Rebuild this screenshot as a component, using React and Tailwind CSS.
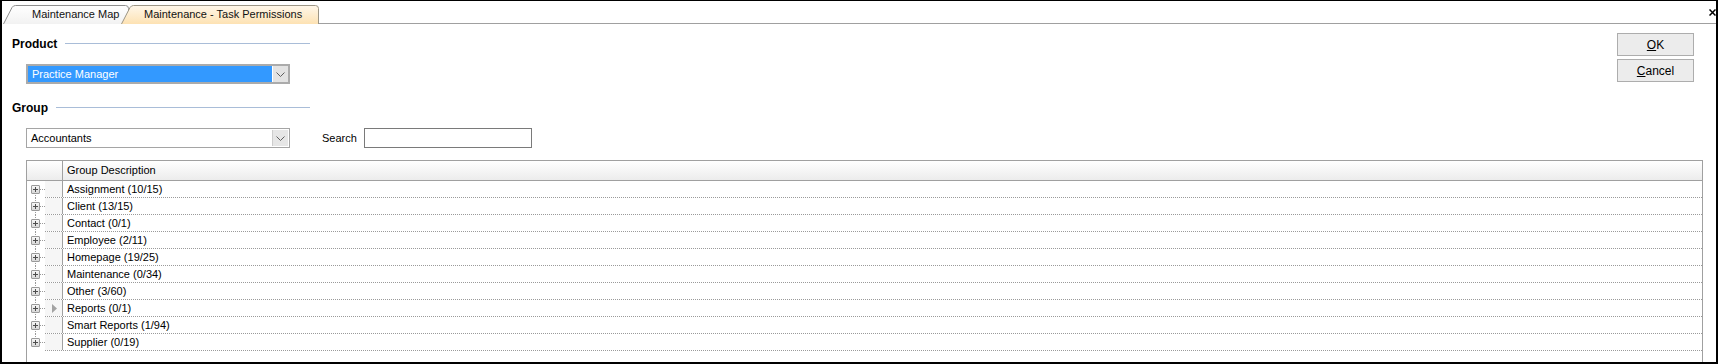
import React from "react";

// rows shown in the permissions grid
const groups = [
  "Assignment (10/15)",
  "Client (13/15)",
  "Contact (0/1)",
  "Employee (2/11)",
  "Homepage (19/25)",
  "Maintenance (0/34)",
  "Other (3/60)",
  "Reports (0/1)",
  "Smart Reports (1/94)",
  "Supplier (0/19)",
];

const Chevron = () => (
  <svg width="9" height="5" viewBox="0 0 9 5">
    <path d="M0.5 0.5 L4.5 4.5 L8.5 0.5" fill="none" stroke="#5f5f5f" strokeWidth="1" />
  </svg>
);

function Tab({ width, active, textLeft, children }) {
  const id = active ? "tabActive" : "tabIdle";
  return (
    <div className={`relative h-[19px] flex items-center ${active ? "-ml-[8px]" : "ml-[1px]"}`} style={{ width }}>
      <svg className="absolute inset-0" width={width} height="19">
        <defs>
          <linearGradient id={id} x1="0" y1="0" x2="0" y2="1">
            <stop offset="0" stopColor={active ? "#fff7ea" : "#ffffff"} />
            <stop offset="1" stopColor={active ? "#fde2b3" : "#f2f2f2"} />
          </linearGradient>
        </defs>
        <path
          d={`M0.5 19 L9 2.5 Q10.2 0.5 12.5 0.5 L${width - 3.5} 0.5 Q${width - 0.5} 0.5 ${width - 0.5} 3.5 L${width - 0.5} 19 Z`}
          fill={`url(#${id})`}
        />
        <path
          d={`M0.5 19 L9 2.5 Q10.2 0.5 12.5 0.5 L${width - 3.5} 0.5 Q${width - 0.5} 0.5 ${width - 0.5} 3.5 L${width - 0.5} 19`}
          fill="none"
          stroke={active ? "#9c9585" : "#8e8e8e"}
        />
      </svg>
      <span className="relative text-[#111]" style={{ marginLeft: textLeft }}>
        {children}
      </span>
    </div>
  );
}

function SectionTitle({ children }) {
  return (
    <div className="h-[15px] w-[298px] flex items-center">
      <span className="font-bold text-[12px]">{children}</span>
      <div className="flex-1 ml-[8px] h-px bg-[#a9bdd8]" />
    </div>
  );
}

function PlusBox() {
  return (
    <div className="relative w-[9px] h-[9px] border border-[#9a9a9a] rounded-[1px] bg-linear-to-b from-[#f6f6f6] to-[#d8d8d8] flex items-center justify-center">
      <svg width="5" height="5" viewBox="0 0 5 5">
        <path d="M0 2.5 H5 M2.5 0 V5" stroke="#4d4d4d" strokeWidth="1" />
      </svg>
    </div>
  );
}

export default function App() {
  return (
    <div className="w-[1718px] h-[364px] bg-white border-t border-x-2 border-b-2 border-black flex flex-col overflow-hidden font-['Liberation_Sans',Arial,sans-serif] text-[11px] text-black">
      {/* tab strip */}
      <div className="h-[23px] flex items-end">
        <Tab width={126} textLeft={29}>Maintenance Map</Tab>
        <Tab width={198} active textLeft={23}>Maintenance - Task Permissions</Tab>
        <div className="flex-1 h-full border-b border-[#a0a0a0] flex justify-end items-start pt-[8px]">
          <svg width="7" height="7" viewBox="0 0 7 7">
            <path d="M0.5 0.5 L6.5 6.5 M6.5 0.5 L0.5 6.5" stroke="#000" strokeWidth="1.5" />
          </svg>
        </div>
      </div>

      {/* filters + buttons */}
      <div className="flex justify-between">
        <div className="pl-[10px] flex flex-col">
          <div className="mt-[12px]">
            <SectionTitle>Product</SectionTitle>
          </div>
          <div className="mt-[13px] ml-[14px] w-[264px] h-[20px] border-2 border-[#ababab] flex">
            <div className="flex-1 bg-[#3399ff] text-white flex items-center pl-[4px] mr-px">Practice Manager</div>
            <div className="w-[15px] bg-[#e3e3e3] flex items-center justify-center">
              <Chevron />
            </div>
          </div>
          <div className="mt-[16px]">
            <SectionTitle>Group</SectionTitle>
          </div>
          <div className="mt-[13px] flex items-center">
            <div className="ml-[14px] w-[264px] h-[20px] border border-[#a5a5a5] flex">
              <div className="flex-1 flex items-center pl-[4px]">Accountants</div>
              <div className="w-[16px] my-px mr-px bg-[#e6e6e6] border-l border-[#cdcdcd] flex items-center justify-center">
                <Chevron />
              </div>
            </div>
            <span className="ml-[32px]">Search</span>
            <div className="ml-[7px] w-[168px] h-[20px] border border-[#7a7a7a] bg-white" />
          </div>
        </div>
        <div className="mt-[9px] mr-[22px] flex flex-col gap-[3px] text-[12px]">
          <button className="w-[77px] h-[23px] border border-[#adadad] bg-[#ececec]">
            <span className="underline">O</span>K
          </button>
          <button className="w-[77px] h-[23px] border border-[#adadad] bg-[#ececec]">
            <span className="underline">C</span>ancel
          </button>
        </div>
      </div>

      {/* grid */}
      <div className="mt-[12px] ml-[24px] mr-[13px] flex-1 border-x border-[#a0a0a0] flex flex-col">
        <div className="h-[21px] flex border-y border-[#a0a0a0] bg-linear-to-b from-white to-[#ececec]">
          <div className="w-[36px] border-r border-[#a0a0a0]" />
          <div className="pl-[4px] flex items-center">Group Description</div>
        </div>
        {groups.map((g, i) => (
          <div key={g} className="h-[17px] flex">
            <div className="relative w-[18px] flex items-center pl-[4px]">
              <div
                className={`absolute left-[8px] border-l border-dotted border-[#9a9a9a] ${i === 0 ? "top-1/2" : "top-0"} ${
                  i === groups.length - 1 ? "bottom-1/2" : "bottom-0"
                }`}
              />
              <PlusBox />
              <div className="flex-1 border-t border-dotted border-[#9a9a9a]" />
            </div>
            <div className="flex-1 flex border-b border-dotted border-[#9a9a9a]">
              <div className="w-[18px] bg-[#f6f6f6] border-r border-[#a0a0a0] flex items-center pl-[7px]">
                {g.startsWith("Reports") && (
                  <svg width="5" height="9" viewBox="0 0 5 9">
                    <path d="M0 0 L5 4.5 L0 9 Z" fill="#a3a3a3" />
                  </svg>
                )}
              </div>
              <div className="pl-[4px] flex items-center">{g}</div>
            </div>
          </div>
        ))}
      </div>
    </div>
  );
}
